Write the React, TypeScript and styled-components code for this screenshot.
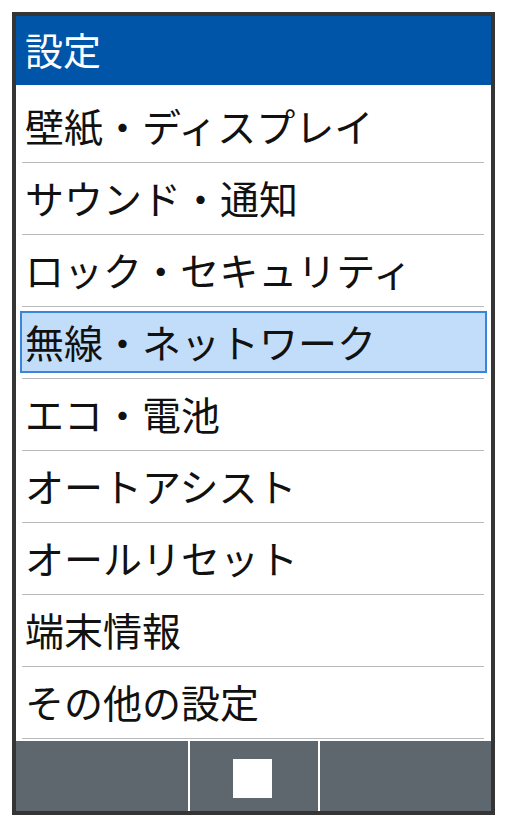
import React from "react";
import styled, { createGlobalStyle } from "styled-components";

const GlobalStyle = createGlobalStyle`
  html, body {
    margin: 0;
    padding: 0;
    background: #ffffff;
  }
  body {
    font-family: "Noto Sans CJK JP", "Noto Sans", sans-serif;
  }
`;

const Frame = styled.div`
  box-sizing: border-box;
  margin: 12px;
  width: 483px;
  height: 803px;
  border: 4px solid #353535;
  background: #ffffff;
  display: flex;
  flex-direction: column;
`;

const Header = styled.header`
  height: 69px;
  flex: 0 0 69px;
  background: #0055a9;
  color: #ffffff;
  display: flex;
  align-items: center;
  padding-left: 9px;
  font-size: 38px;
  line-height: 1;
`;

const Title = styled.h1`
  margin: 0;
  font-size: inherit;
  font-weight: 400;
  padding-bottom: 4px;
`;

const List = styled.ul`
  list-style: none;
  margin: 0;
  padding: 6px 0 0 0;
  display: flex;
  flex-direction: column;
`;

const Item = styled.li`
  display: flex;
  flex-direction: column;
  height: 72px;
`;

const Label = styled.div<{ $selected?: boolean }>`
  box-sizing: border-box;
  height: 62px;
  margin: 4px 4px 5px 4px;
  padding-left: 3px;
  padding-bottom: 2px;
  border: 2px solid ${(p) => (p.$selected ? "#3a84da" : "transparent")};
  background: ${(p) => (p.$selected ? "#c2ddfa" : "transparent")};
  color: #111111;
  font-size: 39px;
  line-height: 1;
  display: flex;
  align-items: center;
  white-space: nowrap;
`;

const Divider = styled.div`
  height: 1px;
  margin: 0 7px 0 6px;
  background: #b6babd;
`;

const SoftKeys = styled.nav`
  margin-top: 2px;
  height: 70px;
  display: grid;
  grid-template-columns: 1fr 128px 1fr;
  column-gap: 2px;
  background: #ffffff;
`;

const Key = styled.div`
  background: #5f676e;
  display: flex;
  align-items: center;
  justify-content: center;
  padding-top: 4px;
`;

const SquareMark = styled.span`
  display: block;
  width: 39px;
  height: 39px;
  background: #ffffff;
  margin-left: -3px;
`;

const items = [
  "壁紙・ディスプレイ",
  "サウンド・通知",
  "ロック・セキュリティ",
  "無線・ネットワーク",
  "エコ・電池",
  "オートアシスト",
  "オールリセット",
  "端末情報",
  "その他の設定",
];

export default function App() {
  return (
    <>
      <GlobalStyle />
      <Frame>
        <Header>
          <Title>設定</Title>
        </Header>
        <List>
          {items.map((t, i) => (
            <Item key={t}>
              <Label $selected={i === 3}>{t}</Label>
              <Divider />
            </Item>
          ))}
        </List>
        <SoftKeys>
          <Key />
          <Key>
            <SquareMark />
          </Key>
          <Key />
        </SoftKeys>
      </Frame>
    </>
  );
}
